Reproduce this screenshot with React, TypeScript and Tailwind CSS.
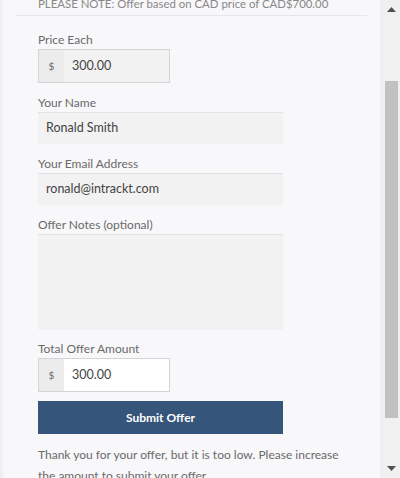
import React from 'react';

const font = { fontFamily: 'Lato, "Liberation Sans", sans-serif' };

function Label({ children }: { children: React.ReactNode }) {
  return <div className="h-4 text-[12px] leading-4 text-[#6a6a6a]">{children}</div>;
}

function MoneyInput({ value, white }: { value: string; white?: boolean }) {
  return (
    <div className="mt-px flex h-[34px] w-[132px] border border-[#d4d4d4]">
      <div className="flex w-[25px] items-center justify-center bg-[#ececec] text-[10px] text-[#666]">$</div>
      <div
        className={`flex flex-1 items-center pl-[8px] text-[12.5px] text-[#444] ${white ? 'bg-white' : 'bg-[#f2f2f2]'}`}
      >
        {value}
      </div>
    </div>
  );
}

function TextInput({ value }: { value: string }) {
  return (
    <div className="mt-px flex h-[32px] w-[245px] items-center border-t border-[#e2e2e2] bg-[#f2f2f2] pl-2 text-[12.5px] text-[#444]">
      {value}
    </div>
  );
}

export default function App() {
  return (
    <div className="flex h-[478px] w-[400px] overflow-hidden bg-[#f0f0f0]" style={font}>
      <div className="ml-[3px] w-[377px] bg-[#f8f7f9]">
        <div className="px-[13px]">
          <div className="-mt-[4px] h-4 whitespace-nowrap pl-[22px] text-[11.4px] leading-4 text-[#888]">
            PLEASE NOTE: Offer based on CAD price of CAD$700.00
          </div>
          <div className="mt-[3px] border-t border-[#e6e6e6]" />
        </div>
        <div className="pl-[35px]">
          <div className="mt-[16px]">
            <Label>Price Each</Label>
            <MoneyInput value="300.00" />
          </div>
          <div className="mt-[12px]">
            <Label>Your Name</Label>
            <TextInput value="Ronald Smith" />
          </div>
          <div className="mt-[12px]">
            <Label>Your Email Address</Label>
            <TextInput value="ronald@intrackt.com" />
          </div>
          <div className="mt-[12px]">
            <Label>Offer Notes (optional)</Label>
            <div className="mt-px h-[96px] w-[245px] border-t border-[#e2e2e2] bg-[#f2f2f2]" />
          </div>
          <div className="mt-[11px]">
            <Label>Total Offer Amount</Label>
            <MoneyInput value="300.00" white />
          </div>
          <button className="mt-[9px] flex h-[33px] w-[245px] items-center justify-center bg-[#36557a] text-[12px] font-bold text-white">
            Submit Offer
          </button>
          <p className="mt-[10px] w-[320px] text-[12px] leading-[21px] text-[#6a6a6a]">
            Thank you for your offer, but it is too low. Please increase the amount to submit your offer.
          </p>
        </div>
      </div>
      <div className="ml-[3px] flex w-[17px] flex-col items-center bg-[#f0f0f0]">
        <svg width="9" height="5" viewBox="0 0 9 5" className="mt-[7px]">
          <path d="M0 5 L4.5 0 L9 5 Z" fill="#505050" />
        </svg>
        <div className="mt-[69px] h-[337px] w-[13px] bg-[#c1c1c1]" />
        <div className="flex-1" />
        <svg width="9" height="5" viewBox="0 0 9 5" className="mb-[7px]">
          <path d="M0 0 L9 0 L4.5 5 Z" fill="#505050" />
        </svg>
      </div>
    </div>
  );
}
